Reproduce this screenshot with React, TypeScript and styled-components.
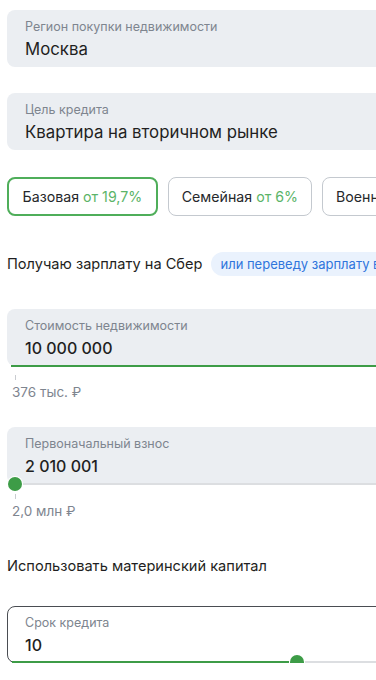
import React from "react";
import styled, { createGlobalStyle } from "styled-components";

const Global = createGlobalStyle`
  html, body { margin: 0; padding: 0; background: #fff; overflow: hidden; }
  body { font-family: Inter, "Noto Sans", sans-serif; color: #1f1f22; }
`;

const Page = styled.div`
  width: 460px;
  padding: 10px 0 0 7px;
  display: flex;
  flex-direction: column;
`;

const Field = styled.div<{ $outlined?: boolean; $mt?: number }>`
  position: relative;
  height: 57px;
  box-sizing: border-box;
  margin-top: ${(p) => p.$mt ?? 0}px;
  border-radius: 8px;
  background: ${(p) => (p.$outlined ? "#fff" : "#ebeef2")};
  border: ${(p) => (p.$outlined ? "1px solid #4a4d52" : "none")};
  padding: ${(p) => (p.$outlined ? "8px 17px 0" : "9px 18px 0")};
  display: flex;
  flex-direction: column;
  gap: 3px;
`;

const Label = styled.div`
  font-size: 12.5px;
  color: #7e858f;
  line-height: 16px;
`;

const Value = styled.div<{ $bold?: boolean }>`
  font-size: ${(p) => (p.$bold ? 16 : 16.8)}px;
  line-height: 22px;
  color: #1f1f22;
  font-weight: ${(p) => (p.$bold ? 500 : 400)};
`;

const Track = styled.div<{ $fill: number }>`
  position: absolute;
  left: 4px;
  right: 0;
  bottom: -1px;
  height: 2px;
  background: linear-gradient(
    to right,
    #3d9c47 0,
    #3d9c47 ${(p) => p.$fill}px,
    #dcdee1 ${(p) => p.$fill}px
  );
`;

const Thumb = styled.div<{ $x: number }>`
  position: absolute;
  top: -6px;
  left: ${(p) => p.$x - 7}px;
  width: 14px;
  height: 14px;
  border-radius: 50%;
  background: #3d9c47;
  box-shadow: 0 0 0 1px #fff;
`;

const Hint = styled.div<{ $mt: number }>`
  margin-top: ${(p) => p.$mt}px;
  padding-left: 5px;
  display: flex;
  flex-direction: column;
`;

const Tick = styled.div`
  width: 1px;
  height: 5px;
  margin-left: 3px;
  background: #c9ccd0;
`;

const HintText = styled.div`
  margin-top: 3px;
  font-size: 13.5px;
  color: #7e858f;
  line-height: 18px;
`;

const Chips = styled.div`
  margin-top: 27px;
  display: flex;
  gap: 10px;
`;

const Chip = styled.div<{ $active?: boolean }>`
  height: 39px;
  box-sizing: border-box;
  padding: 0 ${(p) => (p.$active ? 13.5 : 13)}px;
  border-radius: 8px;
  border: ${(p) => (p.$active ? "2px solid #4fae5a" : "1px solid #c4c9cf")};
  display: flex;
  align-items: center;
  font-size: 14.2px;
  white-space: nowrap;
  color: #26282b;
`;

const Rate = styled.span`
  color: #5bb468;
  margin-left: 4px;
`;

const Row = styled.div<{ $mt: number }>`
  margin-top: ${(p) => p.$mt}px;
  display: flex;
  align-items: center;
  gap: 9px;
  font-size: 14.6px;
  line-height: 18px;
  white-space: nowrap;
  color: #1f1f22;
`;

const Badge = styled.span`
  background: #eaf2fd;
  color: #2f75dc;
  font-size: 13px;
  height: 24px;
  border-radius: 12px;
  padding: 0 9px;
  display: flex;
  align-items: center;
`;

export default function App() {
  return (
    <>
      <Global />
      <Page>
        <Field>
          <Label>Регион покупки недвижимости</Label>
          <Value>Москва</Value>
        </Field>
        <Field $mt={26}>
          <Label>Цель кредита</Label>
          <Value>Квартира на вторичном рынке</Value>
        </Field>
        <Chips>
          <Chip $active>
            Базовая<Rate>от 19,7%</Rate>
          </Chip>
          <Chip>
            Семейная<Rate>от 6%</Rate>
          </Chip>
          <Chip>Военная ипотека</Chip>
        </Chips>
        <Row $mt={36}>
          Получаю зарплату на Сбер
          <Badge>или переведу зарплату в Сбер</Badge>
        </Row>
        <Field $mt={33}>
          <Label>Стоимость недвижимости</Label>
          <Value $bold>10 000 000</Value>
          <Track $fill={1000} />
        </Field>
        <Hint $mt={9}>
          <Tick />
          <HintText>376 тыс. ₽</HintText>
        </Hint>
        <Field $mt={26}>
          <Label>Первоначальный взнос</Label>
          <Value $bold>2 010 001</Value>
          <Track $fill={4}>
            <Thumb $x={4} />
          </Track>
        </Field>
        <Hint $mt={10}>
          <Tick />
          <HintText>2,0 млн ₽</HintText>
        </Hint>
        <Row $mt={37}>Использовать материнский капитал</Row>
        <Field $outlined $mt={31}>
          <Label>Срок кредита</Label>
          <Value $bold>10</Value>
          <Track $fill={285}>
            <Thumb $x={285} />
          </Track>
        </Field>
      </Page>
    </>
  );
}
